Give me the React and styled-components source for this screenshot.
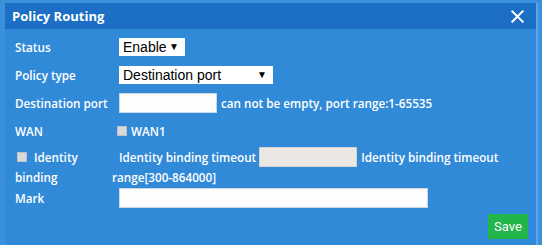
import React from "react";
import styled, { createGlobalStyle } from "styled-components";

const Global = createGlobalStyle`
  html, body { margin: 0; padding: 0; background: #3b90dc; }
  body { width: 542px; height: 245px; overflow: hidden; }
`;

const Modal = styled.div`
  box-sizing: border-box;
  width: 542px;
  height: 245px;
  padding: 3px 4px 0 5px;
  background: #3b90dc;
  font-family: "Open Sans", "Noto Sans", sans-serif;
  color: #fff;
`;

const Inner = styled.div`
  height: 242px;
  background: #318ad8;
  border-right: 2px solid #5aa6e8;
  display: flex;
  flex-direction: column;
`;

const Header = styled.div`
  height: 26px;
  flex: none;
  background: #1c6fc4;
  display: flex;
  align-items: center;
  justify-content: space-between;
  padding: 0 12px 0 7px;
`;

const Title = styled.div`
  font-size: 13px;
  font-weight: 700;
  color: #fff;
`;

const Close = styled.svg`
  width: 13px;
  height: 13px;
`;

const Body = styled.div`
  padding: 4px 0 0 10px;
  display: flex;
  flex-direction: column;
`;

const Row = styled.div`
  display: flex;
  align-items: ${(p) => (p.$top ? "flex-start" : "center")};
  height: ${(p) => p.$h || 28}px;
  padding-top: ${(p) => p.$pt || 0}px;
  box-sizing: border-box;
`;

const Label = styled.div`
  width: 104px;
  flex: none;
  font-size: 11.7px;
  font-weight: 600;
  line-height: 20px;
`;

const Text = styled.span`
  font-size: 11.7px;
  font-weight: 600;
  line-height: 20px;
  margin-left: ${(p) => p.$ml || 0}px;
  white-space: nowrap;
`;

const Select = styled.div`
  box-sizing: border-box;
  width: ${(p) => p.$w}px;
  height: 18px;
  background: #fff;
  color: #000;
  font-family: "Liberation Sans", Arial, sans-serif;
  font-size: 14px;
  display: flex;
  align-items: center;
  justify-content: space-between;
  padding: 0 6px 0 4px;
`;

const Arrow = styled.span`
  font-size: 10px;
  line-height: 1;
`;

const Input = styled.div`
  box-sizing: border-box;
  flex: none;
  width: ${(p) => p.$w}px;
  height: 20px;
  margin-left: ${(p) => p.$ml || 0}px;
  background: ${(p) => (p.$disabled ? "#ebe8e3" : "#fdfdfd")};
  border: 1px solid ${(p) => (p.$disabled ? "#d6d3cc" : "#c9d6e4")};
`;

const Check = styled.span`
  display: inline-block;
  flex: none;
  width: 10px;
  height: 10px;
  background: #d9d9d9;
  border: 1px solid #bfc3c8;
  box-sizing: border-box;
  margin-right: ${(p) => p.$mr || 4}px;
  margin-left: ${(p) => p.$ml || 0}px;
`;

const IdentityLabel = styled.div`
  width: 97px;
  flex: none;
  font-size: 11.7px;
  font-weight: 600;
  line-height: 20px;
  display: flex;
  flex-direction: column;
`;

const Line = styled.div`
  display: flex;
  align-items: center;
  height: 20px;
  padding-left: ${(p) => p.$pl || 0}px;
`;

const Timeout = styled.div`
  display: flex;
  flex-direction: column;
`;

const Footer = styled.div`
  display: flex;
  justify-content: flex-end;
  padding: 5px 8px 0 0;
`;

const SaveButton = styled.button`
  width: 40px;
  height: 25px;
  border: none;
  background: #22b54a;
  color: #fff;
  font-family: Roboto, "Liberation Sans", sans-serif;
  font-size: 13px;
  padding: 0;
`;

export default function App() {
  return (
    <>
      <Global />
      <Modal>
        <Inner>
          <Header>
            <Title>Policy Routing</Title>
            <Close viewBox="0 0 14 14">
              <path d="M1.5 1.5 L12.5 12.5 M12.5 1.5 L1.5 12.5" stroke="#fff" strokeWidth="2.2" strokeLinecap="square" />
            </Close>
          </Header>
          <Body>
            <Row>
              <Label>Status</Label>
              <Select $w={66}>
                <span>Enable</span>
                <Arrow>▼</Arrow>
              </Select>
            </Row>
            <Row>
              <Label>Policy type</Label>
              <Select $w={154}>
                <span>Destination port</span>
                <Arrow>▼</Arrow>
              </Select>
            </Row>
            <Row>
              <Label>Destination port</Label>
              <Input $w={98} />
              <Text $ml={4}>can not be empty, port range:1-65535</Text>
            </Row>
            <Row>
              <Label>WAN</Label>
              <Check $ml={-2} />
              <Text>WAN1</Text>
            </Row>
            <Row $h={42} $pt={2} $top>
              <IdentityLabel>
                <Line $pl={2}>
                  <Check $mr={7} />
                  Identity
                </Line>
                <Line>binding</Line>
              </IdentityLabel>
              <Timeout>
                <Line $pl={7}>
                  <Text>Identity binding timeout</Text>
                  <Input $w={98} $ml={3} $disabled />
                  <Text $ml={4}>Identity binding timeout</Text>
                </Line>
                <Line>
                  <Text>range[300-864000]</Text>
                </Line>
              </Timeout>
            </Row>
            <Row $h={22}>
              <Label>Mark</Label>
              <Input $w={309} />
            </Row>
          </Body>
          <Footer>
            <SaveButton>Save</SaveButton>
          </Footer>
        </Inner>
      </Modal>
    </>
  );
}
